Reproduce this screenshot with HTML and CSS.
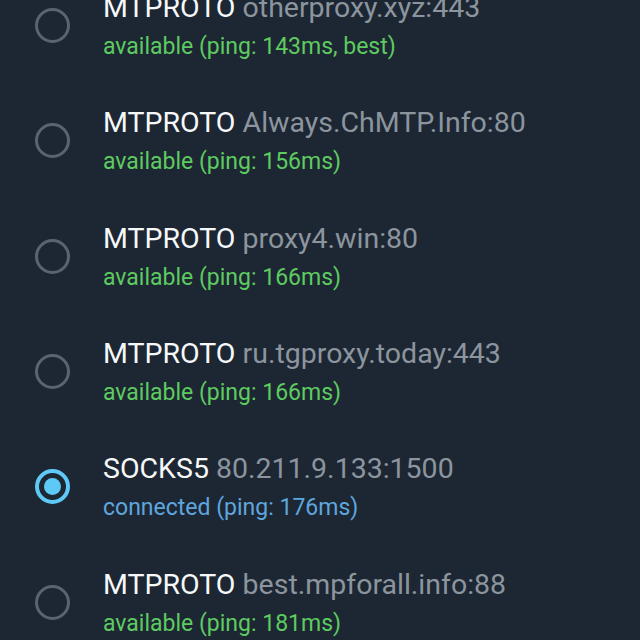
FILE: index.html
```html
<!DOCTYPE html>
<html>
<head>
    <title>Proxy Settings</title>
    <link rel="stylesheet" href="styles.css">
</head>
<body>
    <div class="proxy_list">
        <div class="proxy_row">
            <div class="radio"></div>
            <div class="proxy_info">
                <div class="proxy_title">MTPROTO <span class="address">otherproxy.xyz:443</span></div>
                <div class="proxy_status available">available (ping: 143ms, best)</div>
            </div>
        </div>
        <div class="proxy_row">
            <div class="radio"></div>
            <div class="proxy_info">
                <div class="proxy_title">MTPROTO <span class="address">Always.ChMTP.Info:80</span></div>
                <div class="proxy_status available">available (ping: 156ms)</div>
            </div>
        </div>
        <div class="proxy_row">
            <div class="radio"></div>
            <div class="proxy_info">
                <div class="proxy_title">MTPROTO <span class="address">proxy4.win:80</span></div>
                <div class="proxy_status available">available (ping: 166ms)</div>
            </div>
        </div>
        <div class="proxy_row">
            <div class="radio"></div>
            <div class="proxy_info">
                <div class="proxy_title">MTPROTO <span class="address">ru.tgproxy.today:443</span></div>
                <div class="proxy_status available">available (ping: 166ms)</div>
            </div>
        </div>
        <div class="proxy_row">
            <div class="radio checked"></div>
            <div class="proxy_info">
                <div class="proxy_title">SOCKS5 <span class="address">80.211.9.133:1500</span></div>
                <div class="proxy_status connected">connected (ping: 176ms)</div>
            </div>
        </div>
        <div class="proxy_row">
            <div class="radio"></div>
            <div class="proxy_info">
                <div class="proxy_title">MTPROTO <span class="address">best.mpforall.info:88</span></div>
                <div class="proxy_status available">available (ping: 181ms)</div>
            </div>
        </div>
    </div>
</body>
</html>
```
FILE: styles.css
```css
body {
    margin: 0;
    height: 640px;
    overflow: hidden;
    background: #1d2733;
    font-family: Roboto, "Noto Sans", sans-serif;
}
.proxy_list {
    margin-top: -32px;
}
.proxy_row {
    display: flex;
    align-items: center;
    height: 115.33px;
}
.radio {
    flex: none;
    width: 35px;
    height: 35px;
    margin-left: 34.5px;
    margin-right: 33.5px;
    box-sizing: border-box;
    border: 3px solid #5b646e;
    border-radius: 50%;
}
.radio.checked {
    display: flex;
    align-items: center;
    justify-content: center;
    border: 4px solid #5ec8f7;
}
.radio.checked::after {
    content: "";
    width: 17px;
    height: 17px;
    border-radius: 50%;
    background: #5ec8f7;
}
.proxy_info {
    margin-top: 4px;
    white-space: nowrap;
}
.proxy_title {
    font-size: 28.5px;
    line-height: 34px;
    color: #f6f8f9;
}
.address {
    color: #8c959e;
}
.proxy_status {
    margin-top: 5px;
    font-size: 23px;
    line-height: 34px;
}
.available {
    color: #5dcb60;
}
.connected {
    color: #5ea6de;
}
```
